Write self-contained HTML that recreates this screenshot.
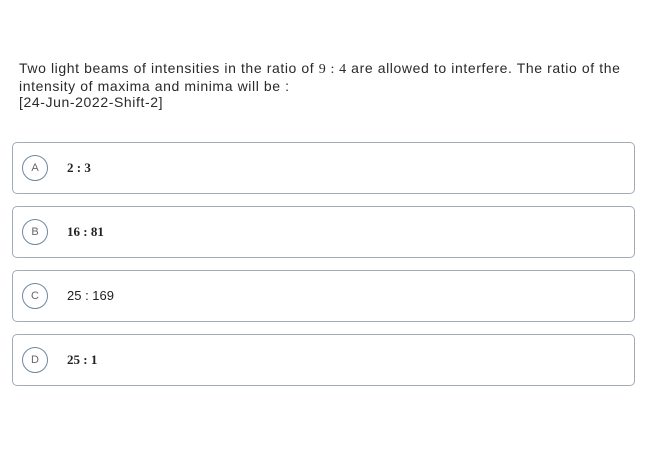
<!DOCTYPE html><html><head><style>
body{margin:0;width:650px;height:450px;background:#fff;font-family:"Liberation Sans",sans-serif;color:#333;}
.q{position:absolute;left:19px;top:60px;font-size:14px;line-height:16px;width:615px;letter-spacing:0.6px;color:#2a2a2a;}
.o{position:absolute;left:12px;width:621px;height:50px;border:1px solid #a3abb4;border-radius:5px;}
.c{position:absolute;left:9px;top:12px;width:24px;height:24px;border:1px solid #6f88a3;border-radius:50%;font-size:11px;color:#666;text-align:center;line-height:24px;}
.t{position:absolute;left:54px;top:17px;font-size:13px;font-weight:bold;font-family:"Liberation Serif",serif;color:#222;}
.s{font-family:"Liberation Sans",sans-serif;font-weight:normal;}
</style></head><body>
<div class="q">Two light beams of intensities in the ratio of <span style="font-family:'Liberation Serif',serif">9 : 4</span> are allowed to interfere. The ratio of the intensity of maxima and minima will be :<br>[24-Jun-2022-Shift-2]</div>
<div class="o" style="top:142px"><div class="c">A</div><div class="t">2 : 3</div></div>
<div class="o" style="top:206px"><div class="c">B</div><div class="t">16 : 81</div></div>
<div class="o" style="top:270px"><div class="c">C</div><div class="t s">25 : 169</div></div>
<div class="o" style="top:334px"><div class="c">D</div><div class="t">25 : 1</div></div>
</body></html>
